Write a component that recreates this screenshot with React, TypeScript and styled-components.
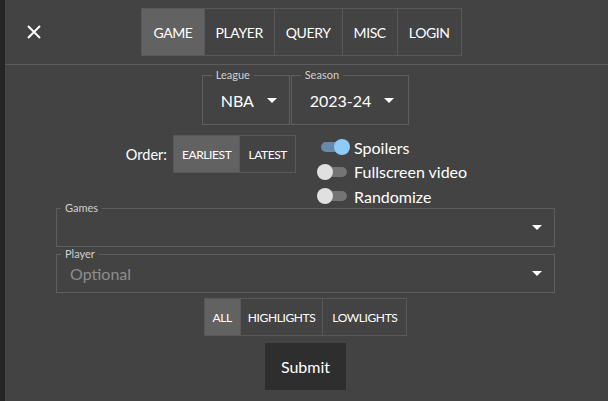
import styled, { createGlobalStyle } from "styled-components";

const GlobalStyle = createGlobalStyle`
  body {
    margin: 0;
    background: #434343;
    color: #ffffff;
    font-family: Lato, "Liberation Sans", sans-serif;
  }
`;

const Shell = styled.div`
  display: flex;
  min-height: 100vh;
`;

const Strip = styled.div`
  width: 5px;
  flex-shrink: 0;
  background: #252525;
`;

const Panel = styled.div`
  flex: 1;
  display: flex;
  flex-direction: column;
`;

const Header = styled.header`
  height: 64px;
  border-bottom: 1px solid #5c5c5c;
  display: grid;
  grid-template-columns: 1fr auto 1fr;
  align-items: center;
  padding-right: 10px;
`;

const CloseButton = styled.button`
  justify-self: start;
  margin-left: 16px;
  width: 26px;
  height: 26px;
  padding: 0;
  display: flex;
  align-items: center;
  justify-content: center;
  background: none;
  border: none;
  color: #fff;
`;

const Group = styled.div`
  display: flex;
`;

const SegButton = styled.button<{ $active?: boolean; $size: number; $h: number; $px: number }>`
  height: ${({ $h }) => $h}px;
  padding: 0 ${({ $px }) => $px}px;
  margin-left: -1px;
  border: 1px solid #585858;
  background: ${({ $active }) => ($active ? "#626262" : "transparent")};
  color: #fff;
  font-family: inherit;
  font-size: ${({ $size }) => $size}px;
  letter-spacing: -0.4px;
  text-transform: uppercase;
  white-space: nowrap;
  &:first-child {
    margin-left: 0;
  }
`;

const Content = styled.main`
  display: flex;
  flex-direction: column;
  align-items: center;
  padding: 4px 53px 0 51px;
`;

const SelectRow = styled.div`
  display: flex;
  gap: 1px;
`;

const Field = styled.fieldset<{ $w?: number }>`
  margin: 0;
  padding: 0 14px 0 18px;
  min-width: 0;
  width: ${({ $w }) => ($w ? `${$w}px` : "auto")};
  box-sizing: border-box;
  border: 1px solid #5f5f5f;
`;

const Legend = styled.legend`
  margin-left: -9px;
  padding: 0 4px;
  font-size: 11px;
  line-height: 12px;
  color: #cfcfcf;
`;

const Value = styled.div<{ $h: number; $muted?: boolean }>`
  height: ${({ $h }) => $h}px;
  display: flex;
  align-items: center;
  justify-content: space-between;
  gap: 13px;
  white-space: nowrap;
  font-size: 16px;
  color: ${({ $muted }) => ($muted ? "#8e8e8e" : "#fff")};
  & > svg {
    flex-shrink: 0;
  }
`;

const SelectValue = styled(Value)`
  padding-bottom: 5px;
`;

const WideField = styled(Field)`
  width: 100%;
  padding: 0 12px 0 13px;
  & > ${Value} {
    padding-bottom: 6px;
  }
`;

const OptionsRow = styled.div`
  display: flex;
  align-items: flex-start;
  gap: 20px;
  margin: 10px 18px 0 0;
  height: 67px;
`;

const Order = styled.div`
  display: flex;
  align-items: center;
  gap: 6px;
  font-size: 14.5px;
`;

const Switches = styled.div`
  display: flex;
  flex-direction: column;
`;

const SwitchRow = styled.label`
  display: flex;
  align-items: center;
  gap: 4px;
  height: 24.5px;
  font-size: 16px;
`;

const Track = styled.span<{ $on?: boolean }>`
  position: relative;
  width: 34px;
  height: 16px;
  &::before {
    content: "";
    position: absolute;
    left: 5px;
    right: 3px;
    top: 3px;
    height: 10px;
    border-radius: 5px;
    background: ${({ $on }) => ($on ? "#678aa9" : "#747474")};
  }
  &::after {
    content: "";
    position: absolute;
    top: 0;
    left: ${({ $on }) => ($on ? "18px" : "1px")};
    width: 16px;
    height: 16px;
    border-radius: 50%;
    background: ${({ $on }) => ($on ? "#90caf9" : "#e0e0e0")};
  }
`;

const GamesBlock = styled.div`
  width: 100%;
  display: flex;
  flex-direction: column;
  gap: 1px;
`;

const Filters = styled(Group)`
  margin-top: 5px;
`;

const Submit = styled.button`
  margin-top: 7px;
  width: 81px;
  height: 47px;
  border: none;
  background: #2e2e2e;
  color: #fff;
  font-family: inherit;
  font-size: 16px;
`;

function Arrow() {
  return (
    <svg width="10" height="5" viewBox="0 0 10 5">
      <path d="M0 0l5 5 5-5z" fill="#fff" />
    </svg>
  );
}

function Switch({ on, label }: { on?: boolean; label: string }) {
  return (
    <SwitchRow>
      <Track $on={on} />
      {label}
    </SwitchRow>
  );
}

const tabs = ["Game", "Player", "Query", "Misc", "Login"];

export default function App() {
  return (
    <>
      <GlobalStyle />
      <Shell>
        <Strip />
        <Panel>
          <Header>
            <CloseButton aria-label="close">
              <svg width="14" height="14" viewBox="0 0 14 14">
                <path d="M1 1l12 12M13 1L1 13" stroke="#fff" strokeWidth="2" />
              </svg>
            </CloseButton>
            <Group>
              {tabs.map((t, i) => (
                <SegButton key={t} $active={i === 0} $size={14} $h={48} $px={11}>
                  {t}
                </SegButton>
              ))}
            </Group>
          </Header>
          <Content>
            <SelectRow>
              <Field $w={88}>
                <Legend>League</Legend>
                <SelectValue $h={38}>
                  NBA <Arrow />
                </SelectValue>
              </Field>
              <Field>
                <Legend>Season</Legend>
                <SelectValue $h={38}>
                  2023-24 <Arrow />
                </SelectValue>
              </Field>
            </SelectRow>
            <OptionsRow>
              <Order>
                Order:
                <Group>
                  <SegButton $active $size={12} $h={38} $px={8}>
                    Earliest
                  </SegButton>
                  <SegButton $size={12} $h={38} $px={8}>
                    Latest
                  </SegButton>
                </Group>
              </Order>
              <Switches>
                <Switch on label="Spoilers" />
                <Switch label="Fullscreen video" />
                <Switch label="Randomize" />
              </Switches>
            </OptionsRow>
            <GamesBlock>
              <WideField>
                <Legend>Games</Legend>
                <Value $h={26}>
                  <span />
                  <Arrow />
                </Value>
              </WideField>
              <WideField>
                <Legend>Player</Legend>
                <Value $h={26} $muted>
                  Optional
                  <Arrow />
                </Value>
              </WideField>
            </GamesBlock>
            <Filters>
              <SegButton $active $size={12} $h={38} $px={8}>
                All
              </SegButton>
              <SegButton $size={12} $h={38} $px={7}>
                Highlights
              </SegButton>
              <SegButton $size={12} $h={38} $px={9}>
                Lowlights
              </SegButton>
            </Filters>
            <Submit>Submit</Submit>
          </Content>
        </Panel>
      </Shell>
    </>
  );
}
